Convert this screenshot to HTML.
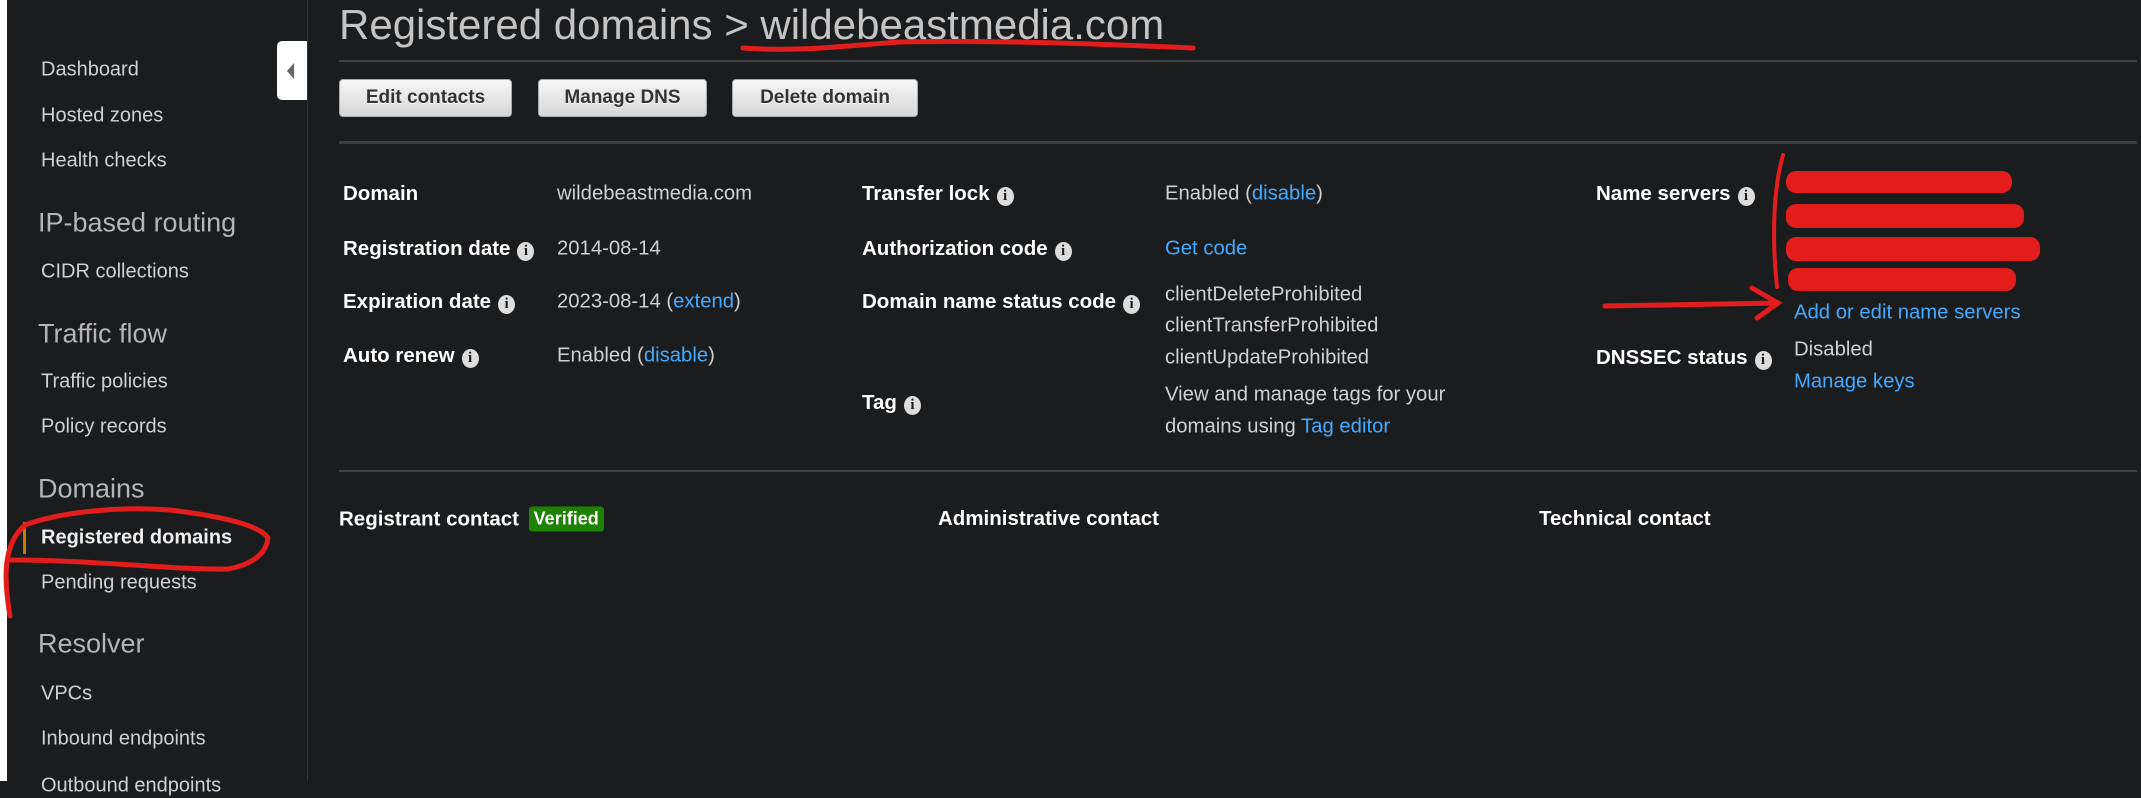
<!DOCTYPE html>
<html><head><meta charset="utf-8"><style>
*{margin:0;padding:0;box-sizing:border-box}
body{width:2141px;height:781px;background:#1b1c1e;font-family:"Liberation Sans",Arial,sans-serif;color:#d5d5d5;position:relative;overflow:hidden}
.a{position:absolute;white-space:nowrap}
.nav{left:41px;font-size:20px;color:#d0d0d0;transform:translateY(-50%)}
.sec{left:38px;font-size:27px;color:#b5b5b5;transform:translateY(-50%)}
.lb{font-weight:bold;font-size:20.5px;color:#fff;transform:translateY(-50%)}
.v{font-size:20.3px;color:#d0d0d0;transform:translateY(-50%)}
.l{color:#44aaff}
.i{display:inline-block;width:17px;height:19px;border-radius:50%;background:#ddd;color:#1b1c1e;font-size:15px;line-height:19px;text-align:center;font-weight:bold;vertical-align:0px;margin-left:7px;font-family:"Liberation Serif",serif}
.btn{top:79px;height:38px;border-radius:4px;background:linear-gradient(#f6f6f6,#d6d6d6);border:1px solid #aaa;color:#333;font-weight:bold;font-size:19px;text-align:center;line-height:36px;text-shadow:0 1px 0 #fff}
.red{position:absolute;background:#e31c1c;border-radius:10px}
</style></head><body>
<div class="a" style="left:0;top:0;width:7px;height:781px;background:#fff"></div>
<div class="a" style="left:307px;top:0;width:1px;height:781px;background:#333"></div>
<div class="a" style="left:277px;top:41px;width:30px;height:59px;background:#fff;border-radius:5px 0 0 5px"></div>
<div class="a" style="left:287px;top:63px;width:0;height:0;border-top:8px solid transparent;border-bottom:8px solid transparent;border-right:7px solid #666"></div>

<div class="a nav" style="top:70px">Dashboard</div>
<div class="a nav" style="top:116px">Hosted zones</div>
<div class="a nav" style="top:161px">Health checks</div>
<div class="a sec" style="top:223px">IP-based routing</div>
<div class="a nav" style="top:272px">CIDR collections</div>
<div class="a sec" style="top:334px">Traffic flow</div>
<div class="a nav" style="top:382px">Traffic policies</div>
<div class="a nav" style="top:427px">Policy records</div>
<div class="a sec" style="top:489px">Domains</div>
<div class="a" style="left:23px;top:522px;width:3px;height:32px;background:#c77a00"></div>
<div class="a nav" style="top:538px;font-weight:bold;color:#eee">Registered domains</div>
<div class="a nav" style="top:583px">Pending requests</div>
<div class="a sec" style="top:644px">Resolver</div>
<div class="a nav" style="top:694px">VPCs</div>
<div class="a nav" style="top:739px">Inbound endpoints</div>
<div class="a nav" style="top:786px">Outbound endpoints</div>

<div class="a" style="left:339px;top:1px;font-size:42px;color:#c4c4c4">Registered domains &gt; wildebeastmedia.com</div>
<div class="a" style="left:339px;top:60px;width:1798px;height:2px;background:#404244"></div>
<div class="a btn" style="left:339px;width:173px">Edit contacts</div>
<div class="a btn" style="left:538px;width:169px">Manage DNS</div>
<div class="a btn" style="left:732px;width:186px">Delete domain</div>
<div class="a" style="left:339px;top:141px;width:1798px;height:3px;background:#3b3e40"></div>

<div class="a lb" style="left:343px;top:194px">Domain</div>
<div class="a v" style="left:557px;top:194px">wildebeastmedia.com</div>
<div class="a lb" style="left:343px;top:249px">Registration date<span class="i">i</span></div>
<div class="a v" style="left:557px;top:249px">2014-08-14</div>
<div class="a lb" style="left:343px;top:302px">Expiration date<span class="i">i</span></div>
<div class="a v" style="left:557px;top:302px">2023-08-14 (<span class="l">extend</span>)</div>
<div class="a lb" style="left:343px;top:356px">Auto renew<span class="i">i</span></div>
<div class="a v" style="left:557px;top:356px">Enabled (<span class="l">disable</span>)</div>

<div class="a lb" style="left:862px;top:194px">Transfer lock<span class="i">i</span></div>
<div class="a v" style="left:1165px;top:194px">Enabled (<span class="l">disable</span>)</div>
<div class="a lb" style="left:862px;top:249px">Authorization code<span class="i">i</span></div>
<div class="a v l" style="left:1165px;top:249px">Get code</div>
<div class="a lb" style="left:862px;top:302px">Domain name status code<span class="i">i</span></div>
<div class="a v" style="left:1165px;top:295px">clientDeleteProhibited</div>
<div class="a v" style="left:1165px;top:326px">clientTransferProhibited</div>
<div class="a v" style="left:1165px;top:358px">clientUpdateProhibited</div>
<div class="a lb" style="left:862px;top:403px">Tag<span class="i">i</span></div>
<div class="a v" style="left:1165px;top:395px">View and manage tags for your</div>
<div class="a v" style="left:1165px;top:427px">domains using <span class="l">Tag editor</span></div>

<div class="a lb" style="left:1596px;top:194px">Name servers<span class="i">i</span></div>
<div class="red" style="left:1786px;top:171px;width:226px;height:22px"></div>
<div class="red" style="left:1786px;top:204px;width:238px;height:24px"></div>
<div class="red" style="left:1786px;top:237px;width:254px;height:24px"></div>
<div class="red" style="left:1788px;top:268px;width:228px;height:23px"></div>
<div class="a v l" style="left:1794px;top:313px">Add or edit name servers</div>
<div class="a lb" style="left:1596px;top:358px">DNSSEC status<span class="i">i</span></div>
<div class="a v" style="left:1794px;top:350px">Disabled</div>
<div class="a v l" style="left:1794px;top:382px">Manage keys</div>

<div class="a" style="left:339px;top:470px;width:1798px;height:2px;background:#404244"></div>
<div class="a lb" style="left:339px;top:519px">Registrant contact <span style="display:inline-block;background:#1d8102;color:#fff;font-size:18px;padding:2px 5px;border-radius:3px;vertical-align:1px;margin-left:4px">Verified</span></div>
<div class="a lb" style="left:938px;top:519px">Administrative contact</div>
<div class="a lb" style="left:1539px;top:519px">Technical contact</div>

<svg class="a" style="left:0;top:0" width="2141" height="781" fill="none" stroke="#e31c1c" stroke-linecap="round">
<path d="M743 48 C800 52 840 46 900 42 C1000 40 1100 44 1193 48" stroke-width="5"/>
<path d="M10 616 C4 580 2 545 25 525 C60 512 120 506 170 510 C220 516 260 525 268 538 C266 555 250 565 228 569 C170 570 100 560 10 560" stroke-width="5"/>
<path d="M1783 155 C1773 190 1772 240 1777 287" stroke-width="4"/>
<path d="M1605 306 L1778 303 M1752 288 L1778 303 L1757 318" stroke-width="5"/>
</svg>
</body></html>
